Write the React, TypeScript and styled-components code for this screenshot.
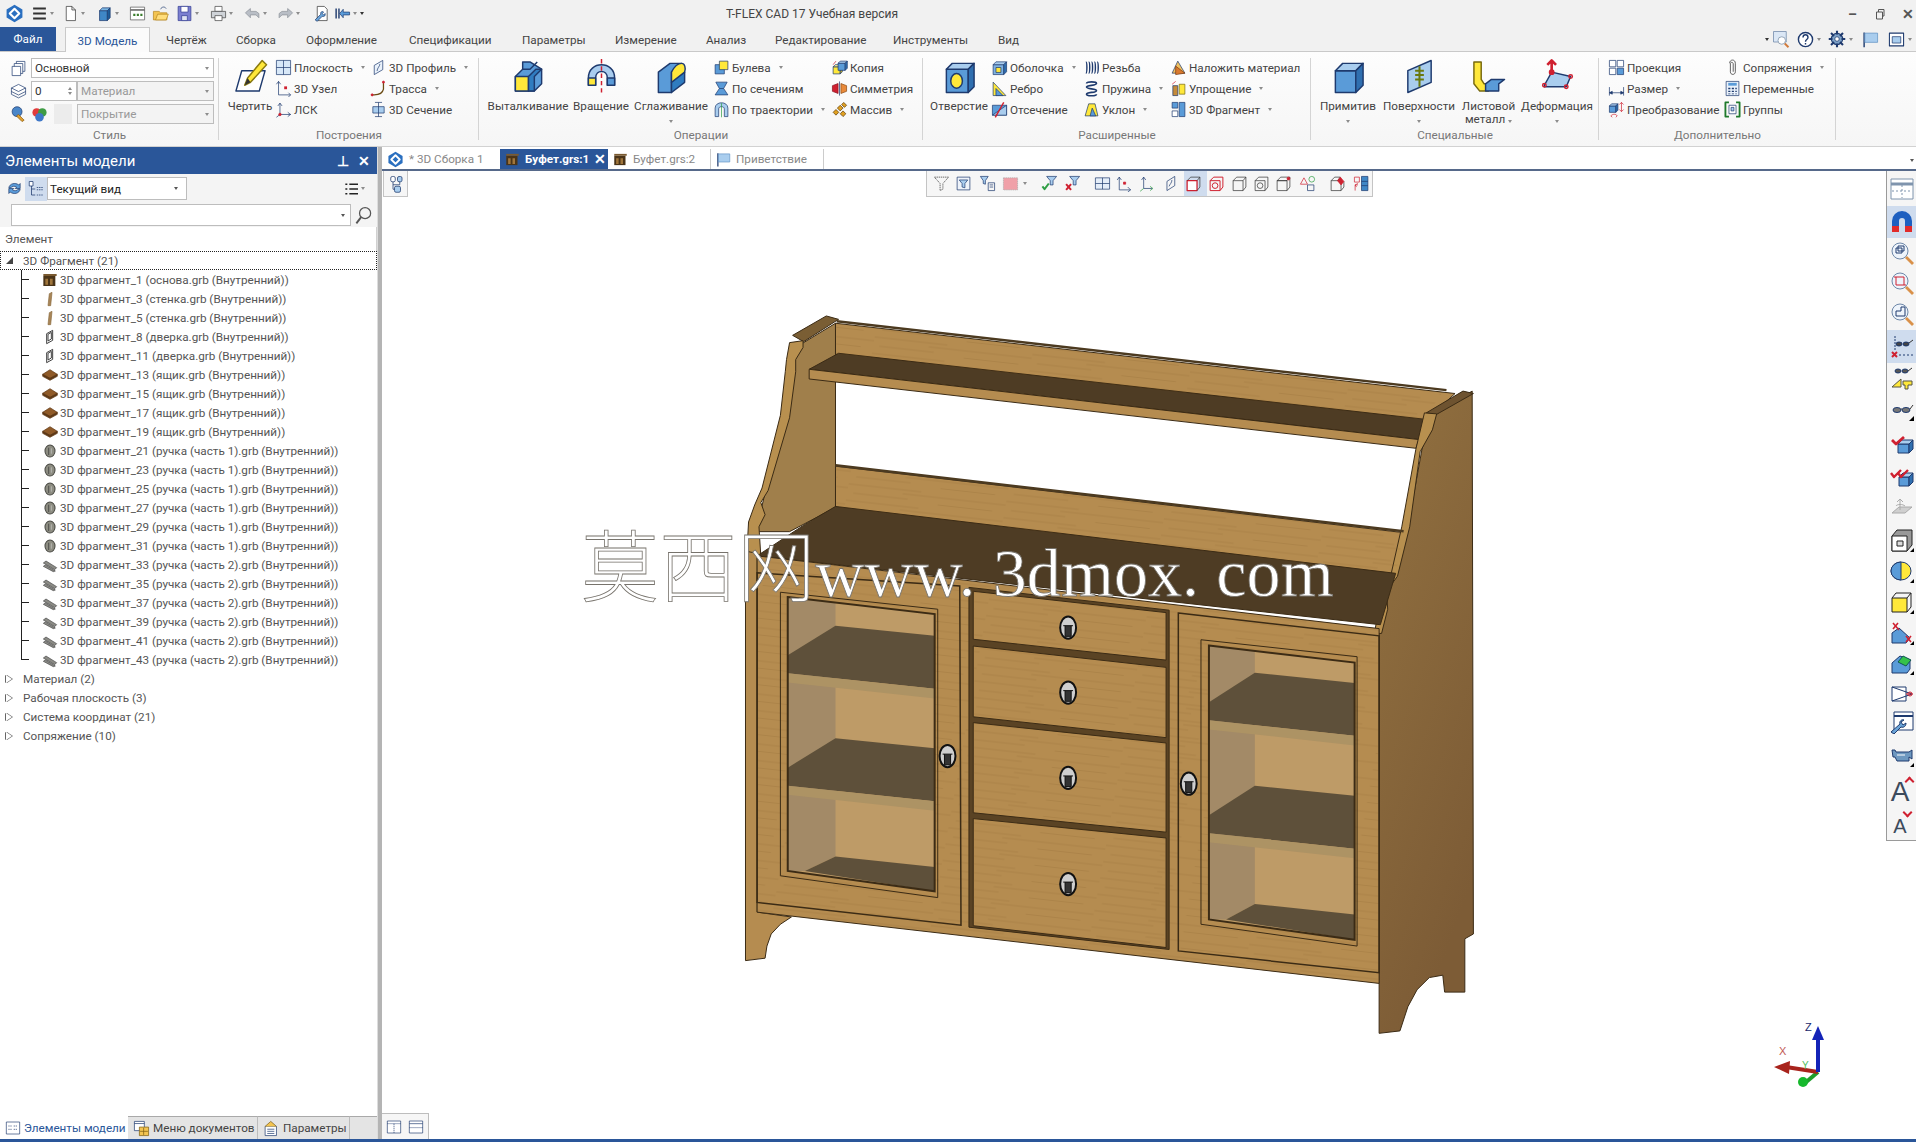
import { FC, ReactNode } from 'react'
import styled, { createGlobalStyle } from 'styled-components'

const N = '#1e3a6e'
const B = '#5a9bd8'
const LB = '#a9cdee'
const Y = '#ffe83a'
const R = '#cf2030'
const G = '#2f9e44'

const Global = createGlobalStyle`
	html, body { margin: 0; padding: 0; background: #fff; }
	body { font-family: Roboto, "Liberation Sans", sans-serif; font-size: 11.7px; color: #444; }
	* { box-sizing: border-box; }
`

const box = (x: number, y: number, w: number, h: number, d: number, f = B, t = LB, s = '#2f6fb0') => (
	<>
		<path d={`M${x} ${y}h${w}v${h}h${-w}z`} fill={f} />
		<path d={`M${x} ${y}l${d} ${-d}h${w}l${-d} ${d}z`} fill={t} />
		<path d={`M${x + w} ${y}l${d} ${-d}v${h}l${-d} ${d}z`} fill={s} />
	</>
)

const art: Record<string, ReactNode> = {
	logo: (<><path d="M12 1l10 6v10l-10 6-10-6V7z" fill="#2a6fc0" stroke="none" /><path d="M12 6l6 6-6 6-6-6z" stroke="#fff" strokeWidth="2.6" /></>),
	menu: (<path d="M3 5h18M3 12h18M3 19h18" strokeWidth="2.6" stroke="#333" />),
	doc: (<path d="M6 2h8l5 5v15H6zM14 2v5h5" stroke="#333" fill="#fff" />),
	cube: box(5, 8, 11, 14, 4, '#3f87c6', '#7ab4e2', '#1d5c99'),
	window: (<><rect x="2" y="3" width="20" height="18" fill="#fff" stroke="#555" /><path d="M2 7h20" stroke="#555" strokeWidth="2" /><path d="M6 14h3M11 14h3M16 14h3" stroke="#3a7d2c" strokeWidth="3" /></>),
	folder: (<><path d="M2 9h8l2 2h9v10H2z" fill="#f3c451" stroke="#b5851c" /><path d="M5 21l3-8h15l-3 8z" fill="#ffdd7a" stroke="#b5851c" /><path d="M12 6c2-4 6-4 8-1" stroke={N} /></>),
	save: (<><path d="M3 2h18v20H3z" fill="#7b7fd0" stroke="#303a92" /><path d="M7 2h10v8H7z" fill="#fff" stroke="#303a92" /><path d="M8 15h8v7H8z" fill="#dfe3f3" stroke="#303a92" /></>),
	print: (<><path d="M7 2h10v7H7z" fill="#fff" stroke="#444" /><path d="M2 9h20v9H2z" fill="#cfd3d8" stroke="#444" /><path d="M7 15h10v7H7z" fill="#fff" stroke="#444" /></>),
	undo: (<path d="M2 11l7-6v4h8l4 3v6l-4-4H9v4z" fill="#b9bec6" stroke="#8b9098" />),
	redo: (<path d="M22 11l-7-6v4H7l-4 3v6l4-4h8v4z" fill="#b9bec6" stroke="#8b9098" />),
	script: (<><path d="M6 2h10l4 4v16H6z" fill="#fff" stroke="#333" /><path d="M3 21l8-8c-1-3 2-5 4-3l-2 2 2 2 2-2c1 3-1 5-4 4l-7 7z" fill="#6aa4d8" stroke={N} /></>),
	rewind: (<><path d="M3 5v14M7 5v14" stroke={N} strokeWidth="2" /><path d="M22 10H13V6l-5 6 5 6v-4h9z" fill={B} stroke={N} /></>),
	search: (<><rect x="2" y="2" width="17" height="14" fill="#dbe7f5" stroke="#6d87a8" /><circle cx="13" cy="14" r="5" fill="#fff" stroke="#7a8fa6" /><path d="M17 18l5 5" stroke="#d27b3c" strokeWidth="2.5" /></>),
	help: (<><circle cx="12" cy="12" r="10" fill="#fff" stroke={N} strokeWidth="2" /><path d="M8.5 9c0-5 7-5 7 0 0 3-3.500 3-3.500 6M12 17v2" stroke={N} strokeWidth="2" /></>),
	gear: (<><circle cx="12" cy="12" r="7.500" fill="#7fa3c9" stroke={N} strokeWidth="1.500" /><path d="M12 1v5M12 18v5M1 12h5M18 12h5M4 4l4 4M16 16l4 4M4 20l4-4M16 8l4-4" stroke={N} strokeWidth="2.800" /><circle cx="12" cy="12" r="3" fill="#fff" stroke={N} /></>),
	flag: (<><path d="M3 2v21" stroke={N} strokeWidth="2" /><path d="M4 3h18v13H4z" fill={LB} stroke="#5b8dc0" /></>),
	panel: (<><rect x="2" y="3" width="20" height="18" fill="#fff" stroke={N} strokeWidth="1.500" /><rect x="6" y="8" width="12" height="9" fill={LB} stroke={N} /></>),
	restore: (<path d="M5 8h12v14H5zM9 8V3h11v13h-3" stroke="#555" strokeWidth="2" />),
	copies: (<><path d="M9 2h12v14H9z" fill="#fff" /><path d="M6 5h12v14H6z" fill="#fff" /><path d="M3 9h12v13H3z" fill="#fff" /></>),
	stack: (<><path d="M2 7l10-5 10 5-10 5z" fill="#fff" /><path d="M2 12l10 5 10-5M2 16l10 5 10-5M2 7v9M22 7v9" /></>),
	brush: (<><circle cx="10" cy="8" r="7" fill="#4a86c8" stroke={N} /><path d="M12 12l8 8-3 2-8-8z" fill="#e0a030" stroke="#8a5a10" /></>),
	palette: (<><circle cx="8" cy="9" r="6" fill="#e23b3b" stroke="none" /><circle cx="16" cy="9" r="6" fill="#3f9c44" stroke="none" /><circle cx="12" cy="16" r="6" fill="#3f78c8" stroke="none" /></>),
	plane: (<><rect x="2" y="2" width="20" height="20" fill="#d8e8f8" stroke={N} /><path d="M12 2v20M2 12h20" stroke={N} /></>),
	node: (<><path d="M5 2v19h17" stroke={N} /><path d="M2 6l3-4 3 4M19 18l3 3-3 3" stroke={N} /><rect x="13" y="9" width="4" height="4" fill={R} stroke="none" /></>),
	lcs: (<><path d="M7 19V3M7 19h15M7 19l-5 4" stroke={N} /><path d="M4 7l3-4 3 4M18 16l4 3-4 3" stroke={N} /><circle cx="7" cy="19" r="1.800" fill={R} stroke={R} /></>),
	profile: (<><path d="M6 22V9L18 2v13z" fill="#eaf2fb" stroke={N} /><path d="M10 17c0-4 4-7 4-10" stroke={N} /></>),
	route: (<><path d="M2 21h4c8 0 12-3 13-8V3" stroke="#6a4a12" strokeWidth="1.800" /><circle cx="19" cy="3" r="1.500" fill={R} stroke={R} /><circle cx="3" cy="21" r="1.500" fill={R} stroke={R} /></>),
	section: (<><path d="M4 8h16v9H4z" fill={LB} stroke={N} /><path d="M12 2v20M7 2h10M7 22h10" stroke={N} /></>),
	boolean: (<><rect x="3" y="8" width="13" height="13" fill={B} stroke={N} /><rect x="9" y="3" width="12" height="12" fill={Y} stroke={N} /></>),
	loft: (<><path d="M4 3h16l-5 9 6 9H3l6-9z" fill={B} stroke={N} /><path d="M9 12h6" stroke={N} /></>),
	sweep: (<><path d="M3 22V10c0-10 18-10 18 0v12h-5V11c0-4-8-4-8 0v11z" fill={LB} stroke={N} /><path d="M12 3v20" stroke={G} /></>),
	copy: (<>{box(3, 11, 10, 10, 3, Y, '#fff08a', '#c9b020')}{box(10, 6, 10, 10, 3)}<path d="M3 8l4-5" stroke={R} /></>),
	mirror: (<><path d="M2 8l8-3v14l-8-3z" fill={R} stroke="#8a1420" /><path d="M22 8l-8-3v14l8-3z" fill="#e98a3a" stroke="#8a4a14" /><path d="M12 2v20" stroke={N} /></>),
	array: (<path d="M3 16l4-4 4 4-4 4zM9 10l4-4 4 4-4 4zM15 5l3-3 4 4-3 3zM13 18l4-4 4 4-4 4z" fill="#e0a020" stroke="#5a3a08" />),
	shell: (<>{box(3, 8, 15, 14, 4, '#7fb2e0')}<rect x="7" y="12" width="7" height="7" fill={Y} stroke={N} /></>),
	rib: (<><path d="M3 22V3l18 19z" fill={Y} stroke={N} /><path d="M7 22V12l10 10z" fill={B} stroke={N} /></>),
	cut: (<><path d="M2 6h20v14H2z" fill={B} stroke={N} /><path d="M22 6v14H2z" fill={LB} stroke={N} /><path d="M6 23L18 2" stroke={R} strokeWidth="2" /></>),
	thread: (<path d="M4 4c2 0 2 16 0 16M8 4c2 0 2 16 0 16M12 4c2 0 2 16 0 16M16 4c2 0 2 16 0 16M20 4c2 0 2 16 0 16" stroke={N} strokeWidth="2" />),
	spring: (<path d="M5 5c0-3 14-3 14 0s-14 2-14 5 14 2 14 5-14 2-14 5c0 3 14 3 14 0" stroke={N} strokeWidth="2.400" />),
	draft: (<><path d="M3 21l5-17h9l4 17z" fill={Y} stroke={N} /><path d="M10 21l3-11 5 11z" fill={B} stroke={N} /></>),
	overlay: (<><path d="M3 20L11 3l10 17z" fill="#f0c060" stroke={N} /><path d="M8 10l13 10-13 2z" fill="#d9792e" stroke="#7a3a10" /></>),
	simplify: (<><path d="M4 8h7v14H4z" fill="#c58a3a" stroke={N} /><path d="M13 6h8v14h-8z" fill={Y} stroke="#77690f" /><path d="M3 6l5-4" stroke={R} /></>),
	frag: (<><rect x="3" y="2" width="8" height="8" fill={B} stroke={N} /><rect x="13" y="2" width="8" height="20" fill={B} stroke={N} /><rect x="3" y="14" width="8" height="8" fill="#fff" stroke={N} /></>),
	proj: (<><rect x="2" y="2" width="9" height="9" fill="#fff" /><rect x="13" y="2" width="9" height="9" fill="#fff" /><rect x="2" y="13" width="9" height="9" fill="#fff" /><rect x="13" y="13" width="9" height="9" fill={B} /></>),
	dim: (<><path d="M2 10v12M22 10v12M2 18h20" stroke={N} /><path d="M2 18l4-2v4zM22 18l-4-2v4z" fill={N} /></>),
	trans: (<>{box(2, 7, 9, 9, 3)}<path d="M19 2v13M16 5l3-3 3 3M16 12l3 3 3-3" stroke={R} /><path d="M4 21c3-3 7-3 9 0M4 21l2 2M13 21l-2 2" stroke={R} /></>),
	clip: (<path d="M8 6c0-6 8-6 8 0v12c0 5-7 5-7 0V7c0-3 4-3 4 0v11" stroke="#555" strokeWidth="1.300" />),
	calc: (<><rect x="3" y="2" width="18" height="20" fill="#eaf2fb" stroke={N} /><rect x="6" y="4" width="12" height="4" fill={B} stroke="none" /><path d="M6 11h3v2H6zM11 11h3v2h-3zM16 11h2v2h-2zM6 15h3v2H6zM11 15h3v2h-3zM16 15h2v2h-2zM6 19h3v1H6zM11 19h3v1h-3zM16 19h2v1h-2z" fill={N} stroke="none" /></>),
	groups: (<><path d="M7 2H2v20h5M17 2h5v20h-5" stroke="#1f7a2c" strokeWidth="2.600" /><rect x="7" y="6" width="10" height="12" fill="#fff" stroke={N} /><rect x="10" y="9" width="4" height="5" fill={LB} stroke={N} /></>),
	pen: (<><path d="M2 22L6 8h16l-4 14z" fill="#fff" stroke={N} /><path d="M8 18l2-5L20 1l3 3-11 12z" fill={Y} stroke="#8a7a10" /><path d="M8 18l2-5 2 3z" fill="#333" stroke="none" /></>),
	extrude: (<><path d="M3 12l5-5V2h5l8 5v10l-5 5H3z" fill={B} stroke={N} /><path d="M3 12h9v10H3z" fill={Y} stroke={N} /><path d="M12 12l5-5h4l-5 5v10h-4z" fill="#2f7cc0" stroke={N} /><path d="M8 7h5l5-5" stroke={N} /></>),
	revolve: (<><path d="M3 18V13C3 1 21 1 21 13v5h-5v-5c0-6-8-6-8 0v5z" fill={LB} stroke={N} /><path d="M3 13h5v5H3z" fill={Y} stroke={N} /><path d="M16 13h5v5h-5z" fill={B} stroke={N} /><path d="M12 0v24" stroke={R} strokeDasharray="3 2" /></>),
	smooth: (<><path d="M3 9l8-6h8l-7 6v14H3z" fill={B} stroke={N} /><path d="M12 9c2-4 5-6 7-6s3 3 2 6c-1 5-3 6-9 7z" fill={Y} stroke={N} /><path d="M12 16l9-7v7l-9 7z" fill="#2f7cc0" stroke={N} /></>),
	hole: (<>{box(3, 7, 15, 16, 4, B, LB)}<ellipse cx="10" cy="15" rx="4" ry="5" fill={Y} stroke={N} /></>),
	primitive: box(3, 8, 14, 15, 5),
	surfaces: (<><path d="M4 8L20 1v15L4 23z" fill={LB} stroke={N} /><path d="M12 5v14M9 8h6M9 11h6M9 14h6" stroke="#6b7a10" strokeWidth="1.400" /></>),
	sheet: (<><path d="M2 2h5v12l2 3h3v5H6l-4-5z" fill={Y} stroke="#77690f" /><path d="M10 17l4-3h9l-4 3v5h-9z" fill={B} stroke={N} /></>),
	deform: (<><path d="M3 18l5-9 13 3-3 7H3z" fill={LB} stroke={N} /><path d="M8 9V1M5 4l3-3 3 3" stroke={R} strokeWidth="1.800" /><circle cx="8" cy="9" r="1.500" fill={R} stroke={R} /><circle cx="21" cy="12" r="1.200" stroke={R} /><circle cx="3" cy="18" r="1.200" stroke={R} /><circle cx="18" cy="19" r="1.200" stroke={R} /></>),
	treeTool: (<><rect x="3" y="2" width="5" height="6" fill="#fff" stroke={N} /><path d="M6 8v12h5M6 12h5" stroke={N} /><path d="M13 10h8M13 13h8M13 20h8" stroke={N} strokeDasharray="2 1" /></>),
	sync: (<><path d="M4 11c1-6 9-8 14-4l2-2v7h-7l2-2c-3-2-7-1-8 1z" fill={B} stroke={N} /><path d="M20 13c-1 6-9 8-14 4l-2 2v-7h7l-2 2c3 2 7 1 8-1z" fill={B} stroke={N} /></>),
	list: (<path d="M2 5h3M2 12h3M2 19h3M8 5h13M8 12h13M8 19h13" stroke="#222" strokeWidth="2.200" />),
	magnify: (<><circle cx="14" cy="9" r="7" stroke="#555" strokeWidth="1.600" /><path d="M9 14l-6 8" stroke="#555" strokeWidth="2.400" /></>),
	tool3d: (<><rect x="5" y="2" width="6" height="7" rx="2" fill="#fff" stroke={N} /><rect x="14" y="2" width="6" height="7" rx="2" fill={LB} stroke={N} /><rect x="10" y="15" width="8" height="8" rx="2" fill={LB} stroke={N} /><path d="M8 9v10h2M8 13h9V9" stroke={N} /></>),
	f1: (<><path d="M2 3h20L14 12v8l-4 2V12z" fill="none" strokeDasharray="2 1" stroke="#333" /></>),
	f2: (<><rect x="3" y="3" width="18" height="18" fill="#eef3fa" /><path d="M6 7h12l-4 5v6l-4-1v-5z" fill={LB} /></>),
	f3: (<><path d="M2 2h11l-4 6v5l-3-1V8z" fill={LB} /><path d="M13 11h9v11h-9zM15 14h5M15 17h5" /></>),
	f4: (<rect x="2" y="4" width="20" height="17" fill="#f0a0a8" stroke="#aaa" strokeDasharray="2 1" />),
	f5: (<><path d="M8 2h14l-5 6v6h-4V8z" fill={LB} /><path d="M2 16l3 4 6-8" stroke={G} strokeWidth="2.800" /></>),
	f6: (<><path d="M8 2h14l-5 6v6h-4V8z" fill={LB} /><path d="M3 13l7 8M10 13l-7 8" stroke={R} strokeWidth="2.800" /></>),
	f7: (<><rect x="2" y="4" width="20" height="16" fill="#e4edf8" /><path d="M12 4v16M2 12h20" /></>),
	f8: (<><path d="M6 3v18h16" /><path d="M3 7l3-4 3 4M18 17l4 4-4 3" /><rect x="12" y="10" width="3" height="3" fill={R} stroke={R} /></>),
	f9: (<><path d="M8 3v16l12 0" stroke={N} /><path d="M8 19l-5 4" stroke={G} /><path d="M5 7l3-4 3 4" stroke={N} /><path d="M17 16l4 3-4 3" stroke={G} /></>),
	f10: (<path d="M7 22V9l11-7v13zM10 16c1-3 4-5 4-9" />),
	f11: (<><path d="M3 8h14v14H3z" stroke={R} strokeWidth="1.800" fill="#fff" /><path d="M3 8l5-5h13v14l-4 5M17 8l4-5" stroke="#333" /></>),
	f12: (<><path d="M3 8h14v14H3zM3 8l5-5h13v14l-4 5" stroke={R} strokeWidth="1.400" /><circle cx="10" cy="15" r="4" stroke={R} strokeWidth="1.400" /></>),
	f13: (<path d="M3 8h14v14H3zM3 8l5-5h13v14l-4 5M17 8l4-5" stroke="#333" />),
	f14: (<><path d="M3 8h14v14H3zM3 8l5-5h13v14l-4 5" stroke="#333" /><circle cx="10" cy="15" r="4" stroke="#333" /></>),
	f15: (<><path d="M3 8h14v14H3zM3 8l5-5h13v14l-4 5M3 8h14l4-5" stroke="#333" /><circle cx="19" cy="5" r="2" fill={R} stroke={R} /></>),
	f16: (<><path d="M2 13l5-9 5 9z" stroke={R} /><circle cx="18" cy="6" r="4" stroke={G} /><rect x="12" y="14" width="9" height="8" stroke={N} /></>),
	f17: (<><path d="M3 8h14v14H3zM3 8l5-5h8l-4 5M17 22l4-5V9" stroke="#333" /><path d="M12 8l4-5 5 6-4 5z" fill={R} stroke={R} /></>),
	f18: (<><rect x="2" y="3" width="7" height="7" stroke={R} /><path d="M3 22V14h4M5 17l-2-3 4-2" stroke={R} /><rect x="12" y="2" width="9" height="20" fill="#3f87c6" /><path d="M12 9h9M12 15h9" /></>),
	view: (<><rect x="1" y="2" width="22" height="20" fill="#fff" stroke="#7f94ad" /><path d="M1 7h22" stroke="#7f94ad" strokeWidth="3" /><path d="M12 8v13M2 14h20" stroke="#7f94ad" strokeDasharray="2 2" /></>),
	magnet: (<><path d="M2 22V11a10 10 0 0 1 20 0v11h-7V11a3 3 0 0 0-6 0v11z" fill="#1d5fc0" stroke="none" /><path d="M2 16h7v6H2zM15 16h7v6h-7z" fill="#e12a2a" stroke="none" /></>),
	zoomA: (<><circle cx="10" cy="10" r="8" fill="#eef4fb" stroke="#6d87a8" /><rect x="6" y="7" width="6" height="5" stroke={N} /><rect x="8" y="5" width="6" height="5" stroke={N} /><path d="M16 16l7 7" stroke="#d9914a" strokeWidth="2.800" /></>),
	zoomB: (<><circle cx="10" cy="10" r="8" fill="#eef4fb" stroke="#6d87a8" /><path d="M6 6h8v8H6zM4 6h2M14 14h2" stroke={R} /><path d="M16 16l7 7" stroke="#d9914a" strokeWidth="2.800" /></>),
	zoomC: (<><circle cx="10" cy="10" r="8" fill="#eef4fb" stroke="#6d87a8" /><path d="M6 14V9h5V5h4v9z" stroke={N} /><path d="M16 16l7 7" stroke="#d9914a" strokeWidth="2.800" /></>),
	glassX: (<><path d="M5 1v14" stroke={N} strokeDasharray="2 1" /><path d="M7 8h5M14 8h5M19 8l4-3" stroke="#333" /><ellipse cx="9" cy="9" rx="3" ry="2" fill="#444" /><ellipse cx="16" cy="9" rx="3" ry="2" fill="#444" /><path d="M2 17l5 5M7 17l-5 5" stroke={R} strokeWidth="2" /><path d="M9 20h14" stroke={N} strokeDasharray="2 2" /></>),
	glassY: (<><ellipse cx="8" cy="5" rx="3" ry="2" fill="#555" /><ellipse cx="15" cy="5" rx="3" ry="2" fill="#555" /><path d="M18 5l4-3" stroke="#333" /><path d="M2 21L11 13v8z" fill={Y} stroke="#554" /><path d="M13 15h9v4h-4v4h-3v-4h-2z" fill={Y} stroke="#554" /></>),
	glassZ: (<><ellipse cx="7" cy="13" rx="4" ry="2.500" fill="#777" /><ellipse cx="16" cy="13" rx="4" ry="2.500" fill="#777" /><path d="M11 12h1M20 12l3-4" stroke="#333" /><path d="M24 24h-5l5-5z" fill="#000" stroke="none" /></>),
	checkOne: (<>{box(8, 13, 11, 9, 4)}<path d="M2 9l4 4 8-7" stroke={R} strokeWidth="2.800" /></>),
	checkTwo: (<>{box(9, 13, 10, 9, 4)}<path d="M1 9l3 4 7-7M8 9l3 4 7-7" stroke={R} strokeWidth="2.400" /></>),
	planeGray: (<><path d="M2 18l7-6h13l-7 6z" fill="#cfcfcf" stroke="#aaa" /><path d="M10 15V4M10 4l-3 3M10 4l3 3M6 11c1-2 7-2 9 0" stroke="#aaa" /></>),
	boxIn: (<><path d="M2 8l5-6h15v15l-5 6H2z" fill="#999" stroke="#222" /><path d="M2 8h15v15H2z" fill="#fff" stroke="#222" /><path d="M7 13h6v5H7z" fill="#ddd" stroke="#222" /><path d="M24 24h-4l4-4z" fill="#000" stroke="none" /></>),
	sphere: (<><ellipse cx="11" cy="12" rx="10" ry="9" fill={Y} stroke={N} /><path d="M11 3a10 9 0 0 0 0 18z" fill={B} stroke={N} /><path d="M24 24h-4l4-4z" fill="#000" stroke="none" /></>),
	boxY: (<><path d="M2 8h15v14H2z" fill={Y} stroke="#222" /><path d="M2 8l4-5h15v14l-4 5M17 8l4-5" stroke="#222" /><path d="M24 24h-4l4-4z" fill="#000" stroke="none" /></>),
	wedgeX: (<><path d="M2 22V12l7-5 11 10-4 5z" fill={B} stroke={N} /><path d="M3 2l6 7M8 2L3 8M16 15l5 6M21 15l-5 6" stroke={R} strokeWidth="1.600" /><path d="M24 24h-4l4-4z" fill="#000" stroke="none" /></>),
	wedgeG: (<><path d="M2 22V12l8-7 10 4v9l-3 4z" fill={B} stroke={N} /><path d="M8 11l5-6 8 4-5 6z" fill="#35c24a" stroke="#155" /><path d="M24 24h-4l4-4z" fill="#000" stroke="none" /></>),
	camera: (<><path d="M2 7h14v14H2z" fill="#fff" stroke={N} /><path d="M2 7l20 7-20 7" stroke={N} /><path d="M16 14h7" stroke={R} strokeDasharray="2 1" /><circle cx="20" cy="14" r="2" stroke={R} /></>),
	wrench: (<><rect x="4" y="2" width="19" height="18" fill="#fff" stroke={N} /><path d="M4 6h19" stroke={N} strokeWidth="2" /><path d="M1 22l9-8c-1-3 2-5 4-4l-3 2 2 3 3-2c0 3-2 5-5 4l-7 7z" fill="#6aa4d8" stroke={N} /></>),
	video: (<><path d="M2 7h3l1 2h13l3-2v9l-3-2v4H7l-2-4H3z" fill="#6e98c0" stroke={N} /><path d="M7 12h8" stroke="#fff" /><path d="M24 24h-4l4-4z" fill="#000" stroke="none" /></>),
	doc1: (<><rect x="2" y="3" width="20" height="18" fill="#fff" stroke={N} /><path d="M2 7h20M12 7v14" stroke={N} strokeDasharray="2 1" /></>),
	doc2: (<><rect x="2" y="3" width="20" height="18" fill="#fff" stroke={N} /><path d="M2 7h20" stroke={N} /><path d="M2 13h20" stroke={N} strokeDasharray="2 1" /></>),
	tabModel: (<><rect x="2" y="3" width="20" height="18" fill="#fff" stroke={N} /><path d="M5 9h5M5 14h5M13 9h6M13 14h6" stroke={N} strokeDasharray="2 1" /></>),
	tabMenu: (<><rect x="2" y="2" width="14" height="13" fill="#fff" stroke={N} /><path d="M2 5h14" stroke={N} /><rect x="9" y="10" width="13" height="12" fill="#f3c451" stroke="#7a5a10" /><path d="M15 11v10M10 16h11" stroke="#7a5a10" /></>),
	tabParam: (<><rect x="3" y="9" width="16" height="13" fill="#fff" stroke={N} /><path d="M6 13h10M6 16h10M6 19h10" stroke={N} /><path d="M3 9l8-7 8 7" fill="#f3c451" stroke="#7a5a10" /></>),
	tFrag: (<><path d="M2 6h18v15H2z" fill="#4a3418" stroke="none" /><path d="M2 3h20v3H2z" fill="#7a5a30" stroke="none" /><path d="M5 10h4v9H5zM12 10h4v9h-4z" fill="#a0763c" stroke="none" /></>),
	tWall: (<path d="M9 22l2-18 4-2-2 20z" fill="#a88557" stroke="#8a6a3c" />),
	tDoor: (<path d="M7 22V7l9-5v15zM9 18V8l5-3v10z" fill="#fff" stroke="#333" strokeWidth="1.400" />),
	tBox: (<><path d="M1 11L12 4l11 7-11 6z" fill="#8f5a28" stroke="#5a3410" /><path d="M1 11v3l11 6 11-6v-3l-11 6z" fill="#5f3a16" stroke="#5a3410" /></>),
	tKnob: (<><ellipse cx="12" cy="12" rx="7.500" ry="9" fill="#8d8d82" stroke="#4a4a44" strokeWidth="1.600" /><path d="M10 7v11" stroke="#333" /><path d="M14 8v8" stroke="#ccc" /></>),
	tBar: (<path d="M2 9l4-3 16 10-3 3zM2 14l3-2 15 9-3 1z" fill="#8b8b85" stroke="#444" />),
}

const Svg = styled.svg<{ $s: number }>`
	width: ${p => p.$s}px;
	height: ${p => p.$s}px;
	flex: none;
	display: block;
`

const Icon: FC<{ n: string; s?: number }> = ({ n, s = 17 }) => (
	<Svg $s={s} viewBox="0 0 24 24" fill="none" stroke={N} strokeWidth="1" strokeLinejoin="round">
		{art[n]}
	</Svg>
)

const Page = styled.div`
	width: 1916px;
	height: 1142px;
	overflow: hidden;
	display: flex;
	flex-direction: column;
	background: #fff;
`

const TitleBar = styled.div`
	height: 27px;
	display: grid;
	grid-template-columns: 726px 1fr auto;
	align-items: center;
	background: #f1f1f1;
`

const Quick = styled.div`
	display: flex;
	align-items: center;
	padding-left: 5px;
`

const QuickSlot = styled.span<{ $w: number }>`
	width: ${p => p.$w}px;
	display: flex;
	align-items: center;
	gap: 2px;
`

const Caret = styled.i<{ $c?: string }>`
	display: inline-block;
	width: 0;
	height: 0;
	flex: none;
	border-left: 2.5px solid transparent;
	border-right: 2.5px solid transparent;
	border-top: 3px solid ${p => p.$c ?? '#8c8c8c'};
`

const TitleText = styled.span`
	font-size: 12px;
	color: #444;
`

const WinButtons = styled.div`
	display: flex;
	align-items: center;
	gap: 15px;
	padding-right: 2px;
	color: #555;
`

const WinGlyph = styled.span`
	width: 13px;
	text-align: center;
	font-size: 14px;
	font-weight: 700;
	line-height: 1;
`

const TabsRow = styled.div`
	height: 25px;
	display: flex;
	align-items: stretch;
	background: #f1f1f1;
	border-bottom: 1px solid #c9c9c9;
	position: relative;
`

const FileTab = styled.div`
	width: 56px;
	background: #2a5699;
	color: #fff;
	display: flex;
	align-items: center;
	justify-content: center;
`

const RibbonTab = styled.div<{ $w: number; $on?: boolean }>`
	width: ${p => p.$w}px;
	display: flex;
	align-items: center;
	padding-top: 2px;
	justify-content: ${p => (p.$on ? 'center' : 'flex-start')};
	white-space: nowrap;
	color: ${p => (p.$on ? '#2a5699' : '#444')};
	${p =>
		p.$on
			? `background:#fbfbfb;border:1px solid #c9c9c9;border-bottom:none;margin-bottom:-1px;margin-left:9px;margin-right:16px;`
			: ''}
`

const RightTools = styled.div`
	margin-left: auto;
	display: flex;
	align-items: center;
	gap: 3px;
	padding-right: 4px;
`

const ToolGap = styled.span<{ $w: number }>`
	width: ${p => p.$w}px;
`

const Ribbon = styled.div`
	height: 95px;
	display: flex;
	background: linear-gradient(#fdfdfd, #f6f6f6);
	border-bottom: 1px solid #d2d2d2;
`

const Group = styled.section<{ $w: number }>`
	width: ${p => p.$w}px;
	flex: none;
	display: flex;
	flex-direction: column;
	padding: 5px 0 0;
	position: relative;
	&::after {
		content: '';
		position: absolute;
		right: 0;
		top: 6px;
		bottom: 6px;
		width: 1px;
		background: #d4d4d4;
	}
`

const GroupBody = styled.div`
	height: 68px;
	flex: none;
	display: flex;
	align-items: flex-start;
`

const GroupLabel = styled.div`
	height: 21px;
	text-align: center;
	color: #777;
	line-height: 21px;
`

const Big = styled.div<{ $w: number; $ml?: number }>`
	width: ${p => p.$w}px;
	margin-left: ${p => p.$ml ?? 0}px;
	display: flex;
	flex-direction: column;
	align-items: center;
	text-align: center;
	white-space: nowrap;
	line-height: 13px;
	padding-top: 2px;
	flex: none;
`

const BigLabel = styled.div`
	margin-top: 6px;
	height: 27px;
`

const Column = styled.div<{ $w: number; $ml?: number }>`
	width: ${p => p.$w}px;
	margin-left: ${p => p.$ml ?? 0}px;
	padding-top: 0;
	flex: none;
`

const Tool = styled.div`
	height: 21px;
	display: flex;
	align-items: center;
	gap: 2px;
	white-space: nowrap;
	& > i {
		margin-left: 6px;
	}
`

const StyleGrid = styled.div`
	padding: 1px 0 0 10px;
	display: grid;
	grid-template-columns: 21px 46px 137px;
	grid-auto-rows: 20px;
	row-gap: 3px;
	align-items: center;
`

const Combo = styled.div<{ $span?: number; $off?: boolean }>`
	grid-column: span ${p => p.$span ?? 1};
	height: 20px;
	border: 1px solid #bdbdbd;
	background: ${p => (p.$off ? '#f3f3f3' : '#fff')};
	color: ${p => (p.$off ? '#999' : '#333')};
	display: flex;
	align-items: center;
	justify-content: space-between;
	padding: 0 4px 0 3px;
`

const Spin = styled.span`
	display: flex;
	flex-direction: column;
	gap: 2px;
	& > i:first-child {
		transform: rotate(180deg);
	}
`

const Swatches = styled.div`
	display: flex;
	align-items: center;
	gap: 4px;
`

const Swatch = styled.span`
	width: 18px;
	height: 20px;
	background: #ececec;
	margin-left: 2px;
`

const Work = styled.div`
	flex: 1;
	min-height: 0;
	display: flex;
`

const Side = styled.aside`
	width: 377px;
	flex: none;
	display: flex;
	flex-direction: column;
`

const SideTitle = styled.div`
	height: 27px;
	background: #2a5699;
	color: #fff;
	font-size: 15px;
	display: flex;
	align-items: center;
	justify-content: space-between;
	padding: 0 7px 0 5px;
`

const SideActions = styled.span`
	display: flex;
	align-items: center;
	gap: 9px;
	font-weight: 700;
	font-size: 14px;
`

const SideBar = styled.div`
	height: 29px;
	background: #f4f4f4;
	display: flex;
	align-items: center;
	padding: 0 12px 0 6px;
`

const HiIcon = styled.span`
	width: 22px;
	height: 24px;
	margin-left: 2px;
	background: #cfdcee;
	display: flex;
	align-items: center;
	justify-content: center;
`

const ViewSelect = styled.div`
	width: 140px;
	height: 23px;
	background: #fff;
	border: 1px solid #bdbdbd;
	color: #222;
	display: flex;
	align-items: center;
	justify-content: space-between;
	padding: 0 8px 0 2px;
`

const Drop = styled.span`
	margin-left: auto;
	display: flex;
	align-items: center;
	gap: 1px;
`

const SearchBar = styled.div`
	height: 24px;
	background: #f4f4f4;
	display: flex;
	align-items: center;
	padding: 0 4px 0 11px;
	gap: 3px;
`

const SearchInput = styled.div`
	width: 340px;
	height: 22px;
	background: #fff;
	border: 1px solid #bdbdbd;
	display: flex;
	align-items: center;
	justify-content: flex-end;
	padding-right: 5px;
`

const ColHead = styled.div`
	height: 24px;
	padding-left: 5px;
	display: flex;
	align-items: center;
	border-right: 1px solid #d0d0d0;
	color: #555;
`

const Tree = styled.div`
	flex: 1;
	min-height: 0;
	background: #fff;
`

const TreeRow = styled.div<{ $focus?: boolean }>`
	height: 19px;
	display: flex;
	align-items: center;
	white-space: nowrap;
	color: #555;
	${p => (p.$focus ? 'outline: 1px dotted #222; outline-offset: -1px;' : '')}
`

const Twist = styled.span<{ $open?: boolean }>`
	width: 23px;
	padding-left: 6px;
	flex: none;
	&::before {
		content: '';
		display: block;
		width: 0;
		height: 0;
		${p =>
			p.$open
				? 'border-left: 7px solid transparent; border-bottom: 7px solid #444;'
				: 'border-left: 6px solid #fff; border-top: 4px solid transparent; border-bottom: 4px solid transparent; filter: drop-shadow(-1px 0 0 #666) drop-shadow(1px 0 0 #666);'}
	}
`

const Branch = styled.span<{ $last?: boolean }>`
	width: 21px;
	height: 19px;
	margin-left: 21px;
	flex: none;
	position: relative;
	&::before {
		content: '';
		position: absolute;
		left: 0;
		top: 0;
		height: ${p => (p.$last ? '10px' : '19px')};
		border-left: 1px solid #222;
	}
	&::after {
		content: '';
		position: absolute;
		left: 0;
		top: 9px;
		width: 8px;
		border-top: 1px solid #222;
	}
`

const Foot = styled.div`
	height: 26px;
	display: flex;
	align-items: flex-end;
	background: #fff;
`

const FootTab = styled.div<{ $on?: boolean; $w: number }>`
	width: ${p => p.$w}px;
	height: 23px;
	flex: none;
	display: flex;
	align-items: center;
	gap: 3px;
	padding-left: 5px;
	color: ${p => (p.$on ? '#2a5699' : '#444')};
	background: ${p => (p.$on ? '#fff' : '#e4e4e4')};
	border-top: ${p => (p.$on ? 'none' : '1px solid #a9a9a9')};
	border-right: ${p => (p.$on ? 'none' : '1px solid #bcbcbc')};
	white-space: nowrap;
`

const FootFill = styled.div`
	flex: 1;
	height: 23px;
	background: #e4e4e4;
	border-top: 1px solid #a9a9a9;
`

const Splitter = styled.div`
	width: 5px;
	flex: none;
	background: #b4b4b4;
	border-left: 1px solid #ddd;
`

const Docs = styled.div`
	flex: 1;
	min-width: 0;
	display: flex;
	flex-direction: column;
`

const DocTabs = styled.div`
	height: 24px;
	display: flex;
	align-items: stretch;
	background: #fff;
	border-bottom: 2px solid #56698a;
	position: relative;
`

const DocTab = styled.div<{ $w: number; $on?: boolean; $sep?: boolean }>`
	width: ${p => p.$w}px;
	flex: none;
	display: flex;
	align-items: center;
	gap: 5px;
	padding-left: 5px;
	margin-top: 2px;
	white-space: nowrap;
	background: ${p => (p.$on ? '#2a5699' : 'transparent')};
	color: ${p => (p.$on ? '#fff' : '#888')};
	font-weight: ${p => (p.$on ? 700 : 400)};
	border-right: ${p => (p.$sep ? '1px solid #ccc' : 'none')};
`

const DocClose = styled.span`
	margin-left: auto;
	padding-right: 4px;
	font-size: 14px;
`

const DocMore = styled.span`
	margin-left: auto;
	align-self: center;
	padding-right: 2px;
`

const ViewRow = styled.div`
	flex: 1;
	min-height: 0;
	display: flex;
`

const Canvas = styled.div`
	flex: 1;
	position: relative;
	background: #fff;
	overflow: hidden;
`

const CornerTool = styled.div`
	position: absolute;
	left: 1px;
	top: 0;
	width: 25px;
	height: 26px;
	border: 1px solid #c4c4c4;
	border-top: none;
	background: #f6f6f6;
	display: flex;
	align-items: center;
	justify-content: center;
`

const FloatBar = styled.div`
	position: absolute;
	left: 544px;
	top: 0;
	width: 447px;
	height: 26px;
	background: #f6f6f6;
	border: 1px solid #c4c4c4;
	border-top: none;
	display: flex;
	align-items: center;
	padding-left: 5px;
`

const FloatSlot = styled.span<{ $on?: boolean; $w: number }>`
	width: ${p => p.$w}px;
	height: 25px;
	flex: none;
	display: flex;
	align-items: center;
	gap: 4px;
	padding-left: 1px;
	background: ${p => (p.$on ? '#cfdcee' : 'transparent')};
`

const Scene = styled.svg`
	position: absolute;
	left: 0;
	top: 0;
`

const Watermark = styled.div`
	position: absolute;
	left: 199px;
	top: 351px;
	white-space: nowrap;
	font-family: "Liberation Serif", "Noto Sans CJK SC", serif;
	font-size: 68px;
	line-height: 80px;
	color: #fff;
	-webkit-text-stroke: 0.8px #77736c;
	letter-spacing: 0.1px;
`

const WatermarkCjk = styled.span`
	font-family: "Noto Sans CJK SC", serif;
	font-weight: 300;
	font-size: 78px;
`

const ViewBottom = styled.div`
	position: absolute;
	left: 0;
	bottom: 0;
	width: 47px;
	height: 26px;
	background: #f6f6f6;
	border: 1px solid #bdbdbd;
	border-bottom: none;
	border-left: none;
	display: flex;
	align-items: center;
	gap: 6px;
	padding-left: 4px;
`

const RightBar = styled.div`
	width: 30px;
	height: 670px;
	flex: none;
	background: #f5f5f5;
	border-left: 1px solid #9a9a9a;
	border-bottom: 1px solid #9a9a9a;
	display: flex;
	flex-direction: column;
`

const RightSlot = styled.span<{ $h: number; $on?: boolean }>`
	height: ${p => p.$h}px;
	flex: none;
	display: flex;
	align-items: center;
	justify-content: center;
	background: ${p => (p.$on ? '#cfdcee' : 'transparent')};
`

const BigA = styled.span<{ $size: number }>`
	font-family: "Liberation Sans", sans-serif;
	font-size: ${p => p.$size}px;
	line-height: 1;
	color: #3c4a5c;
	position: relative;
	margin-right: 3px;
	&::after {
		content: '';
		position: absolute;
		right: -4px;
		top: ${p => (p.$size > 24 ? '0' : '-7px')};
		width: 5px;
		height: 5px;
		border-left: 2px solid ${R};
		border-top: 2px solid ${R};
		transform: rotate(${p => (p.$size > 24 ? 45 : 225)}deg);
	}
`

const StatusLine = styled.div`
	height: 3px;
	background: #2a5699;
	flex: none;
`

const wood = '#b58c50'
const edge = '#3b2b15'

const parts: [string, string][] = [
	// left side
	['385,100 450,50 450,430 375,480 320,480 335,400 370,240 380,150', '#a07f4b'],
	['380,75 435,35 455,42 398,88', '#7a5e34'],
	['375,90 397,86 397,100 385,125 385,150 375,245 340,395 328,420 335,445 325,470 328,530 305,530 308,460 318,425 330,390 360,240 368,150 370,125', '#b8904f'],
	// top back board + shelf
	['450,50 1462,195 1430,232 1410,252 450,114', wood],
	['407,145 455,112 1412,248 1403,290', '#4e3c24'],
	['407,145 1403,290 1398,308 407,165', wood],
	// lower back board
	['450,345 1378,482 1365,570 450,430', wood],
	// right outer panel
	['1430,235 1490,190 1492,1310 1478,1320 1478,1430 1445,1430 1442,1395 1420,1400 1400,1425 1385,1460 1372,1510 1338,1515 1338,680 1345,640 1342,600 1365,570 1385,470 1408,310 1420,260', 'url(#sideShade)'],
	['1415,235 1475,190 1492,195 1432,238', '#6e5330'],
	['1412,235 1432,237 1425,270 1405,315 1388,470 1368,572 1350,603 1352,640 1342,690 1330,690 1338,640 1335,600 1358,565 1375,470 1398,310', '#b8904f'],
	// counter top
	['450,428 1365,566 1340,672 322,530 400,465', '#4e3c24'],
	// left post and foot
	['303,520 322,525 322,1265 378,1275 360,1290 345,1310 338,1335 335,1360 303,1365', wood],
	// front face
	['322,530 1338,680 1338,1412 322,1265', wood],
]

const doorGlass = (x0: number, x1: number, xb: number, yt: number, yb: number, dy: number, shelves: number[], fl: number) => {
	const tilt = (x: number) => ((x - x0) / (x1 - x0)) * dy
	const pt = (x: number, y: number) => `${x},${y + tilt(x)}`
	const frame = `${pt(x0, yt)} ${pt(x1, yt)} ${pt(x1, yb + 7)} ${pt(x0, yb)}`
	return (
		<>
			<polygon points={frame} fill="#c49c62" />
			<polygon points={`${pt(x0, yt)} ${xb},${yt + tilt(xb)} ${xb},${fl} ${x0 + 28},${yb} ${x0},${yb}`} fill="#a68a62" />
			{shelves.map(y => (
				<g key={y}>
					<polygon points={`${x0},${y + 35} ${xb},${y - 26} ${x1},${y - 5} ${x1},${y + 104} ${x0},${y + 72}`} fill="#5a4930" />
					<polygon points={`${x0},${y + 72} ${x1},${y + 104} ${x1},${y + 124} ${x0},${y + 91}`} fill="#b2935f" />
				</g>
			))}
			<polygon points={`${x0 + 28},${yb} ${xb},${fl} ${x1},${fl + 22} ${x1},${yb + 42}`} fill="#5a4930" />
			<polygon points={frame} fill="#8a8f8f" fillOpacity="0.1" stroke={edge} strokeWidth="2" vectorEffect="non-scaling-stroke" />
		</>
	)
}

const Knob: FC<{ x: number; y: number }> = ({ x, y }) => (
	<g>
		<ellipse cx={x} cy={y} rx="13" ry="23" fill="#cfcfcf" stroke="#111" strokeWidth="2" vectorEffect="non-scaling-stroke" />
		<path d={`M${x - 8} ${y - 4}h16M${x - 5} ${y - 4}v22h10v-22`} fill="#333" stroke="#111" vectorEffect="non-scaling-stroke" />
	</g>
)

const Face: FC<{ p: string; w?: number }> = ({ p, w = 1 }) => (
	<polygon points={p} fill="none" stroke={edge} strokeWidth={w} vectorEffect="non-scaling-stroke" />
)

const Cabinet: FC = () => (
	<g transform="translate(560,300) scale(0.6122,0.4847)">
		<defs>
			<linearGradient id="sideShade" x1="0" y1="0" x2="0.4" y2="1">
				<stop offset="0" stopColor="#927140" />
				<stop offset="1" stopColor="#7d5c36" />
			</linearGradient>
			<pattern id="grain" width="260" height="34" patternUnits="userSpaceOnUse" patternTransform="rotate(8)">
				<path d="M0 6h120M90 14h170M10 24h90M150 29h90" stroke="#7a5526" strokeOpacity="0.16" strokeWidth="2" />
			</pattern>
		</defs>
		{parts.map(([p, c]) => (
			<polygon key={p} points={p} fill={c} stroke={edge} strokeWidth="1" vectorEffect="non-scaling-stroke" />
		))}
		<polygon points="450,50 1440,195 1410,252 450,114" fill="url(#grain)" />
		<polygon points="450,345 1378,482 1365,570 450,430" fill="url(#grain)" />
		<polygon points="322,530 1338,680 1338,1412 322,1265" fill="url(#grain)" />
		<path d="M452 46L1448 188M450 343L1378 479" stroke="#4c3a20" strokeWidth="2.500" vectorEffect="non-scaling-stroke" />
		<Face p="322,565 653,592 655,1292 322,1245" w={1.5} />
		<Face p="360,605 617,640 617,1235 360,1190" />
		{doorGlass(372, 612, 450, 615, 1180, 35, [700, 932], 1150)}
		<Face p="1010,648 1338,695 1338,1390 1010,1345" w={1.5} />
		<Face p="1047,703 1302,738 1302,1335 1047,1290" />
		{doorGlass(1060, 1298, 1135, 715, 1280, 35, [797, 1030], 1248)}
		<polygon points="668,595 995,642 995,1342 668,1296" fill="#5a4324" stroke={edge} vectorEffect="non-scaling-stroke" />
		{['675,603 990,647 990,745 675,702', '675,716 990,760 990,905 675,862', '675,874 990,916 990,1100 675,1060', '675,1072 990,1112 990,1338 675,1293'].map(p => (
			<g key={p}>
				<polygon points={p} fill={wood} stroke={edge} vectorEffect="non-scaling-stroke" />
				<polygon points={p} fill="url(#grain)" />
			</g>
		))}
		<Knob x={830} y={678} />
		<Knob x={830} y={812} />
		<Knob x={830} y={988} />
		<Knob x={830} y={1207} />
		<Knob x={633} y={943} />
		<Knob x={1027} y={1000} />
	</g>
)

const Axes: FC = () => (
	<g>
		<path d="M1818 1073L1805 1084" stroke="#1f9e2c" strokeWidth="4" />
		<circle cx="1803" cy="1083" r="5" fill="#16b82c" />
		<path d="M1818 1073L1786 1068" stroke="#a8231c" strokeWidth="4" />
		<path d="M1790 1062L1774 1068l15 7z" fill="#a8231c" />
		<path d="M1818 1073V1040" stroke="#1424b8" strokeWidth="4" />
		<path d="M1812 1041L1818 1027l6 14z" fill="#1424b8" />
		<text x="1805" y="1032" fontSize="11" fill="#222a6c" fontFamily="Liberation Sans">Z</text>
		<text x="1779" y="1056" fontSize="11" fill="#c25a55" fontFamily="Liberation Sans">X</text>
		<text x="1802" y="1070" fontSize="10" fill="#52c060" fontFamily="Liberation Sans">Y</text>
	</g>
)

const tabs: [string, number][] = [
	['Чертёж', 70],
	['Сборка', 70],
	['Оформление', 103],
	['Спецификации', 113],
	['Параметры', 93],
	['Измерение', 91],
	['Анализ', 69],
	['Редактирование', 118],
	['Инструменты', 105],
	['Вид', 40],
]

const quick: [string, number, boolean][] = [
	['logo', 26, false],
	['menu', 31, true],
	['doc', 34, true],
	['cube', 33, true],
	['window', 23, false],
	['folder', 24, false],
	['save', 34, true],
	['print', 34, true],
	['undo', 33, true],
	['redo', 36, true],
	['script', 21, false],
	['rewind', 26, true],
]

const fragments: [string, string][] = [
	['tFrag', '3D фрагмент_1 (основа.grb (Внутренний))'],
	['tWall', '3D фрагмент_3 (стенка.grb (Внутренний))'],
	['tWall', '3D фрагмент_5 (стенка.grb (Внутренний))'],
	['tDoor', '3D фрагмент_8 (дверка.grb (Внутренний))'],
	['tDoor', '3D фрагмент_11 (дверка.grb (Внутренний))'],
	['tBox', '3D фрагмент_13 (ящик.grb (Внутренний))'],
	['tBox', '3D фрагмент_15 (ящик.grb (Внутренний))'],
	['tBox', '3D фрагмент_17 (ящик.grb (Внутренний))'],
	['tBox', '3D фрагмент_19 (ящик.grb (Внутренний))'],
	...[21, 23, 25, 27, 29, 31].map((n): [string, string] => ['tKnob', `3D фрагмент_${n} (ручка (часть 1).grb (Внутренний))`]),
	...[33, 35, 37, 39, 41, 43].map((n): [string, string] => ['tBar', `3D фрагмент_${n} (ручка (часть 2).grb (Внутренний))`]),
]

const floats: [string, number][] = [
	['f1', 22], ['f2', 24], ['f3', 23], ['f4', 39], ['f5', 23], ['f6', 30], ['f7', 21], ['f8', 23], ['f9', 24],
	['f10', 23], ['f11', 23], ['f12', 23], ['f13', 22], ['f14', 22], ['f15', 24], ['f16', 30], ['f17', 24], ['f18', 23],
]

const rights: [string, number, boolean?][] = [
	['view', 35],
	['magnet', 32, true],
	['zoomA', 30],
	['zoomB', 30],
	['zoomC', 32],
	['glassX', 33, true],
	['glassY', 30],
	['glassZ', 32],
	['checkOne', 35],
	['checkTwo', 31],
	['planeGray', 32],
	['boxIn', 33],
	['sphere', 30],
	['boxY', 31],
	['wedgeX', 31],
	['wedgeG', 29],
	['camera', 29],
	['wrench', 31],
	['video', 36],
]

const T: FC<{ n: string; t: string; c?: boolean }> = ({ n, t, c }) => (
	<Tool>
		<Icon n={n} />
		<span>{t}</span>
		{c && <Caret />}
	</Tool>
)

const App: FC = () => (
	<Page>
		<Global />
		<TitleBar>
			<Quick>
				{quick.map(([n, w, c]) => (
					<QuickSlot key={n} $w={w}>
						<Icon n={n} s={n === 'logo' ? 19 : 17} />
						{c && <Caret />}
					</QuickSlot>
				))}
				<Caret $c="#333" />
			</Quick>
			<TitleText>T-FLEX CAD 17 Учебная версия</TitleText>
			<WinButtons>
				<WinGlyph>–</WinGlyph>
				<Icon n="restore" s={12} />
				<WinGlyph>✕</WinGlyph>
			</WinButtons>
		</TitleBar>
		<TabsRow>
			<FileTab>Файл</FileTab>
			<RibbonTab $w={85} $on>3D Модель</RibbonTab>
			{tabs.map(([t, w]) => (
				<RibbonTab key={t} $w={w}>{t}</RibbonTab>
			))}
			<RightTools>
				<Caret $c="#333" />
				<Icon n="search" s={18} />
				<ToolGap $w={1} />
				<Icon n="help" s={17} />
				<Caret />
				<ToolGap $w={1} />
				<Icon n="gear" s={18} />
				<Caret />
				<ToolGap $w={3} />
				<Icon n="flag" s={17} />
				<ToolGap $w={3} />
				<Icon n="panel" s={17} />
				<Caret />
			</RightTools>
		</TabsRow>
		<Ribbon>
			<Group $w={219}>
				<GroupBody>
					<StyleGrid>
						<Icon n="copies" />
						<Combo $span={2}>Основной<Caret /></Combo>
						<Icon n="stack" />
						<Combo>0<Spin><Caret /><Caret /></Spin></Combo>
						<Combo $off>Материал<Caret /></Combo>
						<Swatches>
							<Icon n="brush" />
						</Swatches>
						<Swatches>
							<Icon n="palette" />
							<Swatch />
						</Swatches>
						<Combo $off>Покрытие<Caret /></Combo>
					</StyleGrid>
				</GroupBody>
				<GroupLabel>Стиль</GroupLabel>
			</Group>
			<Group $w={260}>
				<GroupBody>
					<Big $w={46} $ml={8}>
						<Icon n="pen" s={35} />
						<BigLabel>Чертить</BigLabel>
					</Big>
					<Column $w={95} $ml={2}>
						<T n="plane" t="Плоскость" c />
						<T n="node" t="3D Узел" />
						<T n="lcs" t="ЛСК" />
					</Column>
					<Column $w={100}>
						<T n="profile" t="3D Профиль" c />
						<T n="route" t="Трасса" c />
						<T n="section" t="3D Сечение" />
					</Column>
				</GroupBody>
				<GroupLabel>Построения</GroupLabel>
			</Group>
			<Group $w={444}>
				<GroupBody>
					<Big $w={84} $ml={7}>
						<Icon n="extrude" s={35} />
						<BigLabel>Выталкивание</BigLabel>
					</Big>
					<Big $w={62}>
						<Icon n="revolve" s={35} />
						<BigLabel>Вращение</BigLabel>
					</Big>
					<Big $w={78}>
						<Icon n="smooth" s={35} />
						<BigLabel>Сглаживание<br /><Caret /></BigLabel>
					</Big>
					<Column $w={118} $ml={3}>
						<T n="boolean" t="Булева" c />
						<T n="loft" t="По сечениям" />
						<T n="sweep" t="По траектории" c />
					</Column>
					<Column $w={80}>
						<T n="copy" t="Копия" />
						<T n="mirror" t="Симметрия" />
						<T n="array" t="Массив" c />
					</Column>
				</GroupBody>
				<GroupLabel>Операции</GroupLabel>
			</Group>
			<Group $w={388}>
				<GroupBody>
					<Big $w={64} $ml={4}>
						<Icon n="hole" s={35} />
						<BigLabel>Отверстие</BigLabel>
					</Big>
					<Column $w={92}>
						<T n="shell" t="Оболочка" c />
						<T n="rib" t="Ребро" />
						<T n="cut" t="Отсечение" />
					</Column>
					<Column $w={87}>
						<T n="thread" t="Резьба" />
						<T n="spring" t="Пружина" c />
						<T n="draft" t="Уклон" c />
					</Column>
					<Column $w={130}>
						<T n="overlay" t="Наложить материал" />
						<T n="simplify" t="Упрощение" c />
						<T n="frag" t="3D Фрагмент" c />
					</Column>
				</GroupBody>
				<GroupLabel>Расширенные</GroupLabel>
			</Group>
			<Group $w={288}>
				<GroupBody>
					<Big $w={70} $ml={2}>
						<Icon n="primitive" s={35} />
						<BigLabel>Примитив<br /><Caret /></BigLabel>
					</Big>
					<Big $w={72}>
						<Icon n="surfaces" s={35} />
						<BigLabel>Поверхности<br /><Caret /></BigLabel>
					</Big>
					<Big $w={67}>
						<Icon n="sheet" s={35} />
						<BigLabel>Листовой<br />металл <Caret /></BigLabel>
					</Big>
					<Big $w={70}>
						<Icon n="deform" s={35} />
						<BigLabel>Деформация<br /><Caret /></BigLabel>
					</Big>
				</GroupBody>
				<GroupLabel>Специальные</GroupLabel>
			</Group>
			<Group $w={237}>
				<GroupBody>
					<Column $w={116} $ml={9}>
						<T n="proj" t="Проекция" />
						<T n="dim" t="Размер" c />
						<T n="trans" t="Преобразование" />
					</Column>
					<Column $w={105}>
						<T n="clip" t="Сопряжения" c />
						<T n="calc" t="Переменные" />
						<T n="groups" t="Группы" />
					</Column>
				</GroupBody>
				<GroupLabel>Дополнительно</GroupLabel>
			</Group>
		</Ribbon>
		<Work>
			<Side>
				<SideTitle>
					Элементы модели
					<SideActions><span>⊥</span><span>✕</span></SideActions>
				</SideTitle>
				<SideBar>
					<Icon n="sync" s={17} />
					<HiIcon><Icon n="treeTool" s={18} /></HiIcon>
					<ViewSelect>Текущий вид<Caret $c="#555" /></ViewSelect>
					<Drop><Icon n="list" s={16} /><Caret /></Drop>
				</SideBar>
				<SearchBar>
					<SearchInput><Caret $c="#555" /></SearchInput>
					<Icon n="magnify" s={19} />
				</SearchBar>
				<ColHead>Элемент</ColHead>
				<Tree>
					<TreeRow $focus>
						<Twist $open />
						3D Фрагмент (21)
					</TreeRow>
					{fragments.map(([n, t], i) => (
						<TreeRow key={t}>
							<Branch $last={i === fragments.length - 1} />
							<Icon n={n} s={16} />
							<ToolGap $w={2} />
							{t}
						</TreeRow>
					))}
					{['Материал (2)', 'Рабочая плоскость (3)', 'Система координат (21)', 'Сопряжение (10)'].map(t => (
						<TreeRow key={t}>
							<Twist />
							{t}
						</TreeRow>
					))}
				</Tree>
				<Foot>
					<FootTab $on $w={128}><Icon n="tabModel" s={16} />Элементы модели</FootTab>
					<FootTab $w={130}><Icon n="tabMenu" s={17} />Меню документов</FootTab>
					<FootTab $w={92}><Icon n="tabParam" s={17} />Параметры</FootTab>
					<FootFill />
				</Foot>
			</Side>
			<Splitter />
			<Docs>
				<DocTabs>
					<DocTab $w={118}><Icon n="logo" s={17} />* 3D Сборка 1</DocTab>
					<DocTab $w={108} $on><Icon n="tFrag" s={15} />Буфет.grs:1<DocClose>✕</DocClose></DocTab>
					<DocTab $w={103} $sep><Icon n="tFrag" s={15} />Буфет.grs:2</DocTab>
					<DocTab $w={113} $sep><Icon n="flag" s={15} />Приветствие</DocTab>
					<DocMore><Caret $c="#555" /></DocMore>
				</DocTabs>
				<ViewRow>
					<Canvas>
						<Scene width="1504" height="967" viewBox="382 172 1504 967">
							<Cabinet />
							<Axes />
						</Scene>
						<CornerTool><Icon n="tool3d" s={18} /></CornerTool>
						<FloatBar>
							{floats.map(([n, w]) => (
								<FloatSlot key={n} $on={n === 'f11'} $w={w}>
									<Icon n={n} s={17} />
									{n === 'f4' && <Caret />}
								</FloatSlot>
							))}
						</FloatBar>
						<Watermark><WatermarkCjk>莫西网</WatermarkCjk>www. 3dmox. com</Watermark>
						<ViewBottom><Icon n="doc1" s={16} /><Icon n="doc2" s={16} /></ViewBottom>
					</Canvas>
					<RightBar>
						{rights.map(([n, h, on]) => (
							<RightSlot key={n} $h={h} $on={on}><Icon n={n} s={24} /></RightSlot>
						))}
						<RightSlot $h={38}><BigA $size={28}>A</BigA></RightSlot>
						<RightSlot $h={30}><BigA $size={20}>A</BigA></RightSlot>
					</RightBar>
				</ViewRow>
			</Docs>
		</Work>
		<StatusLine />
	</Page>
)

export default App
